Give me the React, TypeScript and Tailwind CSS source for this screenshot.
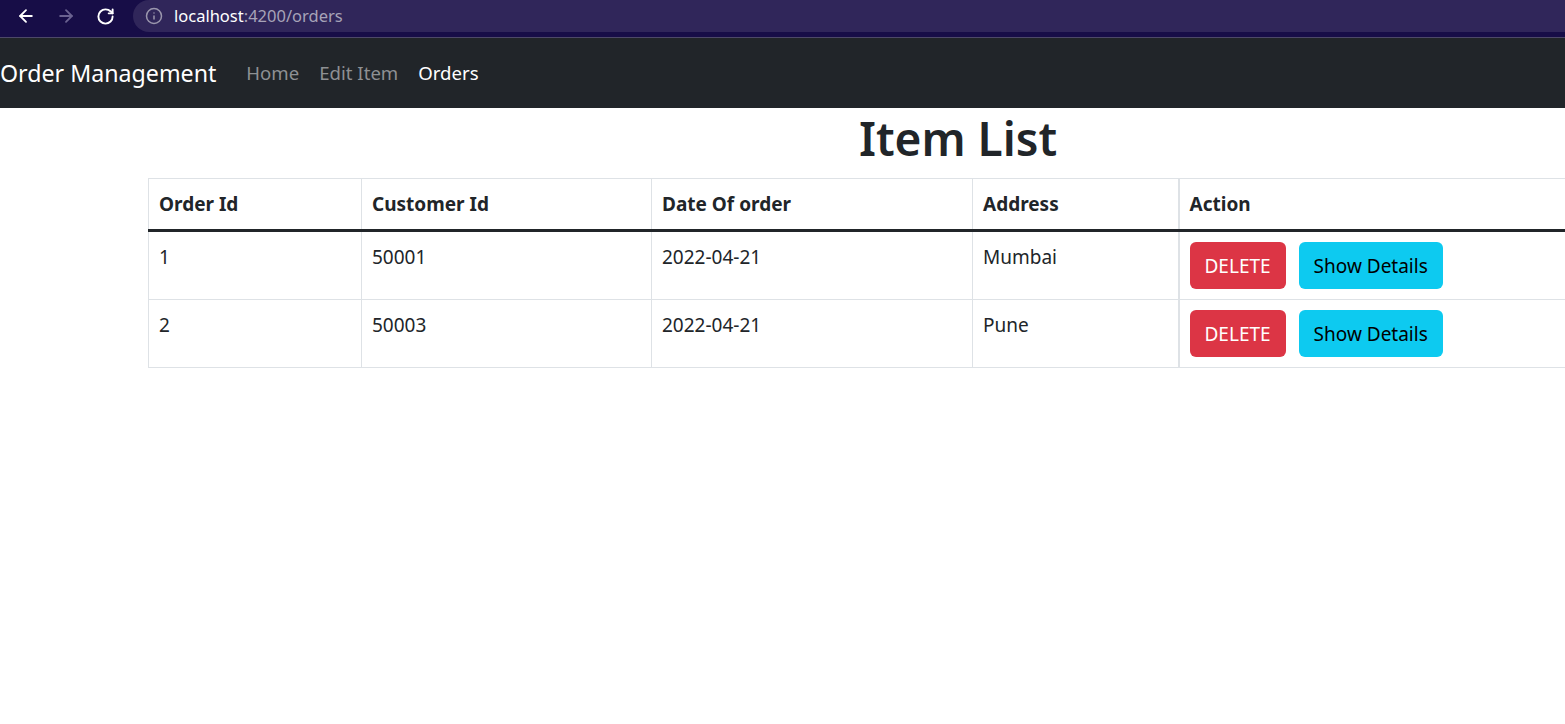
import { ArrowLeft, ArrowRight, RotateCw, Info } from 'lucide-react';

const orders = [
  { id: 1, customerId: 50001, date: '2022-04-21', address: 'Mumbai' },
  { id: 2, customerId: 50003, date: '2022-04-21', address: 'Pune' },
];

function BrowserBar() {
  return (
    <div className="flex h-[38px] items-start bg-[#170d47] border-b border-[#4d4868]">
      <div className="flex h-[32px] items-center pl-[16px] gap-[20px]">
        <ArrowLeft className="w-[20px] h-[20px] text-white" strokeWidth={2.2} />
        <ArrowRight className="w-[20px] h-[20px] text-[#6a6290]" strokeWidth={2.2} />
        <RotateCw className="w-[19px] h-[19px] text-white" strokeWidth={2.4} />
      </div>
      <div className="ml-[18px] flex h-[32px] flex-1 items-center rounded-l-full bg-[#30265a] pl-[12px]">
        <Info className="w-[18px] h-[18px] text-[#9b97ad]" strokeWidth={2} />
        <span className="ml-[11px] text-[16.5px] text-white">
          localhost<span className="text-[#a7a3b8]">:4200/orders</span>
        </span>
      </div>
    </div>
  );
}

function Navbar() {
  return (
    <nav className="flex h-[70px] items-center bg-[#212529]">
      <a className="mr-[20px] text-[23.2px] leading-[37px] text-white">Order Management</a>
      <ul className="flex text-[18.6px] leading-[30px]">
        <li className="px-[10px] text-[#8e9093]">Home</li>
        <li className="px-[10px] text-[#8e9093]">Edit Item</li>
        <li className="px-[10px] text-white">Orders</li>
      </ul>
    </nav>
  );
}

export default function App() {
  const cell = 'border border-[#dee2e6] px-[10px] py-[10px] align-top text-left';

  return (
    <div className="h-[724px] w-[1565px] overflow-hidden bg-white text-[#212529] font-['Noto_Sans',sans-serif]">
      <BrowserBar />
      <Navbar />
      <div className="ml-[148px] w-[1620px]">
        <h1 className="mb-[10px] text-center text-[46px] font-semibold leading-[60px]">Item List</h1>
        <table className="w-[1620px] table-fixed border-collapse text-[19px] leading-[30px]">
          <thead>
            <tr className="border-b-[3px] border-b-[#212529]">
              <th className={`${cell} w-[213px] font-bold`}>Order Id</th>
              <th className={`${cell} w-[290px] font-bold`}>Customer Id</th>
              <th className={`${cell} w-[321px] font-bold`}>Date Of order</th>
              <th className={`${cell} w-[206px] font-bold`}>Address</th>
              <th className={`${cell} border-l-2 font-bold`}>Action</th>
            </tr>
          </thead>
          <tbody>
            {orders.map((o) => (
              <tr key={o.id}>
                <td className={cell}>{o.id}</td>
                <td className={cell}>{o.customerId}</td>
                <td className={cell}>{o.date}</td>
                <td className={cell}>{o.address}</td>
                <td className={`${cell} border-l-2`}>
                  <div className="flex gap-[13px]">
                    <button className="h-[47px] rounded-[6px] bg-[#dc3545] px-[15px] text-white">DELETE</button>
                    <button className="h-[47px] rounded-[6px] bg-[#0dcaf0] px-[15px] text-black">Show Details</button>
                  </div>
                </td>
              </tr>
            ))}
          </tbody>
        </table>
      </div>
    </div>
  );
}
